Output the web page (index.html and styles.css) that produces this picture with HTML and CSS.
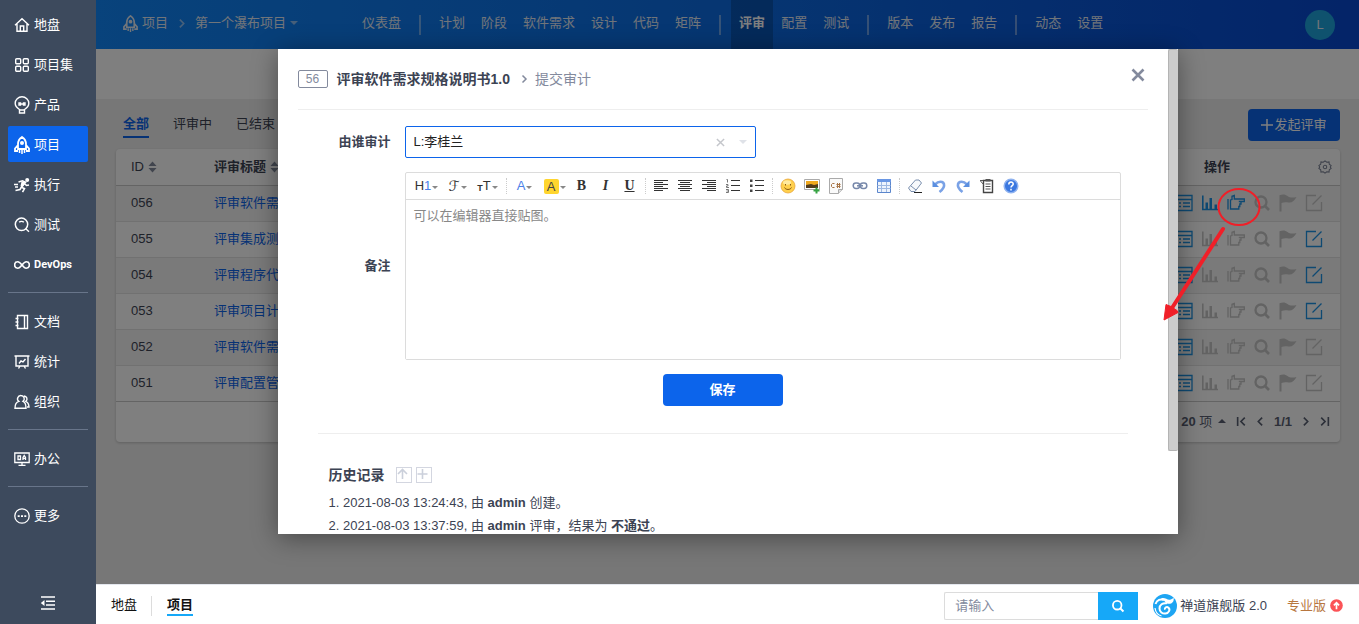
FILE: index.html
```html
<!DOCTYPE html>
<html lang="zh-CN">
<head>
    <meta charset="UTF-8">
    <meta name="viewport" content="width=device-width, initial-scale=1.0">
    <title>提交审计</title>
    <link rel="stylesheet" href="styles.css">
</head>
<body>
    <!-- icon sprite -->
    <svg class="sprite" width="0" height="0" aria-hidden="true">
        <symbol id="i-home" viewBox="0 0 16 16"><path d="M1 8.2 8 1.8l7 6.4M3 7v7.3h10V7M6.3 14V9h3.4v5" fill="none" stroke="currentColor" stroke-width="1.4"/></symbol>
        <symbol id="i-grid" viewBox="0 0 16 16"><g fill="none" stroke="currentColor" stroke-width="1.4"><rect x="1.7" y="1.7" width="5" height="5" rx="1"/><rect x="9.3" y="1.7" width="5" height="5" rx="1"/><rect x="1.7" y="9.3" width="5" height="5" rx="1"/><rect x="9.3" y="9.3" width="5" height="5" rx="1"/></g></symbol>
        <symbol id="i-bulb" viewBox="0 0 16 18"><path d="M5.5 13.5C3 12 1.2 10 1.2 7.3a6.8 6.5 0 0 1 13.6 0C14.8 10 13 12 10.5 13.5V17h-5zM5.500 14h5M5 7h1.500v2H5zM9.500 7H11v2H9.500zM6.500 8h3" fill="none" stroke="currentColor" stroke-width="1.4"/></symbol>
        <symbol id="i-rocket" viewBox="0 0 16 18"><path d="M8 .9C5 2.800 4 5.500 4 8v5h8V8c0-2.500-1-5.200-4-7.100zM4 9l-3 3.500V15h3M12 9l3 3.500V15h-3" fill="none" stroke="currentColor" stroke-width="1.800"/><circle cx="8" cy="7" r="2" fill="currentColor"/><path d="M5.500 14v3M8 14v4M10.500 14v3" stroke="currentColor" stroke-width="1.500"/></symbol>
        <symbol id="i-run" viewBox="0 0 16 16"><circle cx="13.200" cy="3" r="2" fill="currentColor"/><path d="M4.500 5 8.500 3.800l3 1.400-4 5 3 1.500-2 3.500M8 9 6 12.500l-4.500 1M10.500 6.500 12.500 8.500l2.500-.5M0 7.500h4M1 10h3" fill="none" stroke="currentColor" stroke-width="1.600"/><path d="M7.500 4.500h4L9 9.500 6.500 9z" fill="currentColor"/></symbol>
        <symbol id="i-test" viewBox="0 0 16 16"><circle cx="7.500" cy="7.300" r="6.200" fill="none" stroke="currentColor" stroke-width="1.5"/><path d="m11.500 11.500 3.500 3.200M5.200 5.300c1-1.300 3.600-1.300 4.600 0" fill="none" stroke="currentColor" stroke-width="1.400"/></symbol>
        <symbol id="i-loop" viewBox="0 0 16 16"><path d="M8 8C6 5.500 5 4.800 3.800 4.800a3.200 3.200 0 0 0 0 6.400C5 11.200 6 10.500 8 8s3-3.200 4.200-3.200a3.200 3.200 0 0 1 0 6.400C11 11.200 10 10.500 8 8z" fill="none" stroke="currentColor" stroke-width="1.600"/></symbol>
        <symbol id="i-doc" viewBox="0 0 16 16"><path d="M3.500 1.500h10v13h-10zM10.500 1.500v13M1.500 4.500h3M1.500 8h3M1.500 11.500h3" fill="none" stroke="currentColor" stroke-width="1.400"/></symbol>
        <symbol id="i-board" viewBox="0 0 16 16"><path d="M.5 2h15M2 2v10h12V2M6 12l-1.500 2.500M10 12l1.500 2.500M5 9.500l2-2.500 2 1 2.500-3" fill="none" stroke="currentColor" stroke-width="1.400"/></symbol>
        <symbol id="i-users" viewBox="0 0 16 16"><path d="M7 1.500a3.300 3.300 0 0 1 2 5.900c2 .8 3 2.600 3 6.800H1c0-4.200 1-6 3.800-6.800A3.300 3.300 0 0 1 7 1.500zM10 2a3 3 0 0 1 1.800 5.400c2 .9 3 2.600 3.200 5.600h-2" fill="none" stroke="currentColor" stroke-width="1.400"/></symbol>
        <symbol id="i-oa" viewBox="0 0 16 16"><path d="M.8 2h14.400v9.500H.8zM8 11.500V14M4.500 14.300h7M4 5h2.500v3.500H4zM9 9V6.500l1.200-2 1.300 2V9M9 7.400h2.500" fill="none" stroke="currentColor" stroke-width="1.300"/></symbol>
        <symbol id="i-more" viewBox="0 0 16 16"><circle cx="8" cy="8" r="7.200" fill="none" stroke="currentColor" stroke-width="1.300"/><path d="M3.700 7.200h2v1.800h-2zM7 7.200h2v1.800H7zM10.300 7.200h2v1.800h-2z" fill="currentColor"/></symbol>
        <symbol id="i-fold" viewBox="0 0 16 16"><path d="M1 2h14M6 6.200h9M6 10h9M1 14h14" stroke="currentColor" stroke-width="1.600"/><path d="M4.500 5v6L.8 8z" fill="currentColor"/></symbol>
        <symbol id="i-sort" viewBox="0 0 10 12"><path d="M5 0l4.500 5h-9zM5 12l4.500-5h-9z" fill="currentColor"/></symbol>
        <symbol id="i-gear" viewBox="0 0 16 16"><path d="M8 1l2 1.600 2.600-.4.300 2.600L15 6.500 14 8l1 1.600-2.100 1.600-.3 2.600-2.600-.4L8 15l-2-1.600-2.600.4-.3-2.600L1 9.600 2 8 1 6.500l2.100-1.700.3-2.600 2.600.4z" fill="none" stroke="currentColor" stroke-width="1.200"/><circle cx="8" cy="8" r="2" fill="none" stroke="currentColor" stroke-width="1.200"/></symbol>
        <symbol id="i-list" viewBox="0 0 18 18"><path d="M1 1.500h16v15H1zM1 5.500h16M4 9h2M4 12.500h2M8 9h7M8 12.500h7" fill="none" stroke="currentColor" stroke-width="1.300"/></symbol>
        <symbol id="i-chart" viewBox="0 0 18 18"><path d="M1.800 1.500v14H17" fill="none" stroke="currentColor" stroke-width="1.600"/><path d="M4.500 8.500H7V16H4.500zM8.500 4H11v12H8.500zM13.500 10.500H16V16h-2.500z" fill="currentColor"/></symbol>
        <symbol id="i-hand" viewBox="0 0 18 18"><path d="M1 5v10.500M3.500 15V6L5 5.500V2.200L7.300 1.500V5H17.300v2.500h-5.500H14V10h-1.200v2.500h-1V15z" fill="none" stroke="currentColor" stroke-width="1.300"/></symbol>
        <symbol id="i-search" viewBox="0 0 18 18"><circle cx="8" cy="8" r="5.500" fill="none" stroke="currentColor" stroke-width="2.300"/><path d="m11.500 11.500 4.500 4.500" stroke="currentColor" stroke-width="2.600"/></symbol>
        <symbol id="i-flag" viewBox="0 0 18 18"><path d="M.5 1.200C4-.2 6.500.3 8.500 2s5 2 9 1c-2 3.800-4.500 6-8 5.500-2.500-.4-4.500-.5-7 .5v8.500h-2z" fill="currentColor"/></symbol>
        <symbol id="i-edit" viewBox="0 0 18 18"><path d="M11 1.500H1.500v15h15V8M7.500 10.500 16.500 1.500" fill="none" stroke="currentColor" stroke-width="1.300"/></symbol>
        <symbol id="i-left" viewBox="0 0 10 10"><path d="M6.500 1.500 3 5l3.500 3.500" fill="none" stroke="currentColor" stroke-width="1.500"/></symbol>
        <symbol id="i-right" viewBox="0 0 10 10"><path d="M3.500 1.500 7 5 3.500 8.500" fill="none" stroke="currentColor" stroke-width="1.500"/></symbol>
        <symbol id="i-first" viewBox="0 0 10 10"><path d="M1.500 1v8M8 1.500 4.500 5 8 8.500" fill="none" stroke="currentColor" stroke-width="1.500"/></symbol>
        <symbol id="i-last" viewBox="0 0 10 10"><path d="M8.500 1v8M2 1.500 5.500 5 2 8.500" fill="none" stroke="currentColor" stroke-width="1.500"/></symbol>
        <symbol id="i-close" viewBox="0 0 14 14"><path d="m1.500 1.500 11 11M12.500 1.500l-11 11" stroke="currentColor" stroke-width="2.600"/></symbol>
    </svg>

    <aside class="sidebar">
        <nav class="menu">
            <a href="#"><svg><use href="#i-home"/></svg>地盘</a>
            <a href="#"><svg><use href="#i-grid"/></svg>项目集</a>
            <a href="#"><svg class="tall"><use href="#i-bulb"/></svg>产品</a>
            <a href="#" class="active"><svg class="tall"><use href="#i-rocket"/></svg>项目</a>
            <a href="#"><svg><use href="#i-run"/></svg>执行</a>
            <a href="#"><svg><use href="#i-test"/></svg>测试</a>
            <a href="#"><svg><use href="#i-loop"/></svg><span class="devops">DevOps</span></a>
            <hr>
            <a href="#"><svg><use href="#i-doc"/></svg>文档</a>
            <a href="#"><svg><use href="#i-board"/></svg>统计</a>
            <a href="#"><svg><use href="#i-users"/></svg>组织</a>
            <hr>
            <a href="#"><svg><use href="#i-oa"/></svg>办公</a>
            <hr>
            <a href="#"><svg><use href="#i-more"/></svg>更多</a>
        </nav>
        <button type="button" class="fold" aria-label="收起"><svg><use href="#i-fold"/></svg></button>
    </aside>

    <div class="app">
        <header class="topbar">
            <div class="crumb">
                <a href="#"><svg><use href="#i-rocket"/></svg>项目</a>
                <svg class="sep"><use href="#i-right"/></svg>
                <a href="#">第一个瀑布项目<i class="caret"></i></a>
            </div>
            <nav class="topnav">
                <a href="#">仪表盘</a><i></i>
                <a href="#">计划</a><a href="#">阶段</a><a href="#">软件需求</a><a href="#">设计</a><a href="#">代码</a><a href="#">矩阵</a><i></i>
                <a href="#" class="active">评审</a><a href="#">配置</a><a href="#">测试</a><i></i>
                <a href="#">版本</a><a href="#">发布</a><a href="#">报告</a><i></i>
                <a href="#">动态</a><a href="#">设置</a>
            </nav>
            <span class="avatar">L</span>
        </header>
        <div class="subbar"></div>

        <main class="content">
            <div class="toolbar">
                <nav class="tabs">
                    <a href="#" class="active">全部</a>
                    <a href="#">评审中</a>
                    <a href="#">已结束</a>
                </nav>
                <button type="button" class="create"><svg viewBox="0 0 12 12"><path d="M6 0v12M0 6h12" stroke="currentColor" stroke-width="1.500"/></svg>发起评审</button>
            </div>
            <div class="panel">
                <table>
                    <thead>
                        <tr>
                            <th class="col-id">ID <svg class="sort"><use href="#i-sort"/></svg></th>
                            <th>评审标题 <svg class="sort"><use href="#i-sort"/></svg></th>
                            <th class="col-act"><div class="act-head">操作<svg><use href="#i-gear"/></svg></div></th>
                        </tr>
                    </thead>
                    <tbody id="reviewList"></tbody>
                </table>
                <div class="pager">
                    <span class="size"><b>20</b> 项 <i class="caret up"></i></span>
                    <svg><use href="#i-first"/></svg>
                    <svg><use href="#i-left"/></svg>
                    <b>1/1</b>
                    <svg><use href="#i-right"/></svg>
                    <svg><use href="#i-last"/></svg>
                </div>
            </div>
        </main>

        <div class="backdrop">
            <section class="modal" role="dialog" aria-labelledby="modalTitle">
                <div class="modal-body">
                    <div class="modal-head">
                        <span class="badge">56</span>
                        <h2 id="modalTitle">评审软件需求规格说明书1.0</h2>
                        <svg class="arrow"><use href="#i-right"/></svg>
                        <span class="action">提交审计</span>
                        <button type="button" class="close" aria-label="关闭"><svg><use href="#i-close"/></svg></button>
                    </div>
                    <form class="form">
                        <label for="auditor">由谁审计</label>
                        <div class="picker">
                            <select id="auditor"><option>L:李桂兰</option></select>
                            <button type="button" class="clear" aria-label="清除"><svg viewBox="0 0 10 10"><path d="m1 1 8 8M9 1 1 9" stroke="currentColor" stroke-width="1.600"/></svg></button>
                            <i class="caret"></i>
                        </div>
                        <label for="comment">备注</label>
                        <div class="editor">
                            <div class="edit-tools">
                                <button type="button" class="drop first">H<span class="blue">1</span><i class="caret"></i></button>
                                <button type="button" class="drop script">ℱ<i class="caret"></i></button>
                                <button type="button" class="drop"><small>T</small>T<i class="caret"></i></button>
                                <i class="split"></i>
                                <button type="button" class="drop blue">A<i class="caret"></i></button>
                                <button type="button" class="drop"><mark>A</mark><i class="caret"></i></button>
                                <button type="button" class="serif"><b>B</b></button>
                                <button type="button" class="serif"><b><em>I</em></b></button>
                                <button type="button" class="serif"><b><u>U</u></b></button>
                                <i class="split"></i>
                                <button type="button" aria-label="左对齐"><svg viewBox="0 0 16 16"><path d="M1 2.500h14M1 4.500h9M1 6.500h14M1 8.500h9M1 10.500h14M1 12.500h9" stroke="#333"/></svg></button>
                                <button type="button" aria-label="居中"><svg viewBox="0 0 16 16"><path d="M1 2.500h14M3 4.500h10M1 6.500h14M3 8.500h10M1 10.500h14M3 12.500h10" stroke="#333"/></svg></button>
                                <button type="button" aria-label="右对齐"><svg viewBox="0 0 16 16"><path d="M1 2.500h14M6 4.500h9M1 6.500h14M6 8.500h9M1 10.500h14M6 12.500h9" stroke="#333"/></svg></button>
                                <button type="button" aria-label="编号"><svg viewBox="0 0 16 16"><path d="M6 2.500h9M6 7.500h9M6 12.500h9" stroke="#333"/><path d="M1.500 1.500h1v3M1 6.500h2v1.500H1.500v1.500H4M1 11.500h2.500v3H1M1.500 13h2" fill="none" stroke="#777"/></svg></button>
                                <button type="button" aria-label="列表"><svg viewBox="0 0 16 16"><path d="M6 2.500h9M6 7.500h9M6 12.500h9" stroke="#333"/><path d="M1 1.500h2.500V4H1zM1 6.500h2.500V9H1zM1 11.500h2.500V14H1z" fill="#444"/></svg></button>
                                <i class="split"></i>
                                <button type="button" aria-label="表情"><svg viewBox="0 0 16 16"><circle cx="8" cy="8" r="7" fill="#ffd04d" stroke="#e8a63a" stroke-width=".8"/><ellipse cx="7" cy="4.500" rx="4" ry="2.200" fill="#ffeaa0"/><path d="M5.500 6v1.500M10.500 6v1.500M4.500 9.500c1 2.600 6 2.600 7 0" fill="none" stroke="#8a5a12"/></svg></button>
                                <button type="button" aria-label="图片"><svg viewBox="0 0 16 16"><path d="M.5 1.500h15v10H.5z" fill="#fff" stroke="#aaa"/><path d="M2 3h12v4H2z" fill="#f0a91e"/><path d="M2 7l5-1 3 1 4-1v4H2z" fill="#503b1c"/><path d="M12.500 9.500v6M9.500 12.500h6" stroke="#36a343" stroke-width="2"/></svg></button>
                                <button type="button" aria-label="代码"><svg viewBox="0 0 16 16"><path d="M1.500.5h13v11l-4 4h-9z" fill="#fafafa" stroke="#aaa"/><path d="M14.500 11.500h-4v4" fill="#ddd" stroke="#aaa"/><path d="M6.500 5.500h-2l-1 1v2l1 1h2M9.500 5v5M11.500 5v5M8.500 6.500h4M8.500 8.500h4" fill="none" stroke="#a77345"/></svg></button>
                                <button type="button" aria-label="链接"><svg viewBox="0 0 16 16"><g fill="none" stroke="#7788aa" stroke-width="1.500"><rect x="1.200" y="5" width="6.500" height="5.500" rx="2.700"/><rect x="8.300" y="5" width="6.500" height="5.500" rx="2.700"/><path d="M5 7.800h6"/></g></svg></button>
                                <button type="button" aria-label="表格"><svg viewBox="0 0 16 16"><path d="M1.500 1.500h13v13h-13z" fill="#eef4fd" stroke="#5b86cc"/><path d="M1 1h14v3H1z" fill="#6a97e4"/><path d="M1.500 7.500h13M1.500 10.500h13M5.500 4v10M10.500 4v10" stroke="#9fb9e2"/></svg></button>
                                <i class="split"></i>
                                <button type="button" aria-label="清除格式"><svg viewBox="0 0 16 16"><path d="m1.500 10 7-8h3.500l2.500 3L8 13.500H4z" fill="#f7f9fc" stroke="#7a8fae"/><path d="M4 8l5 4" fill="none" stroke="#7a8fae"/><path d="M7 14.500h8" stroke="#222"/></svg></button>
                                <button type="button" aria-label="撤销"><svg viewBox="0 0 16 16"><path d="M4 6.500C9 1.500 15 4 12.500 9.500 11.800 11 10.500 12.500 8.500 14" fill="none" stroke="#7aa2e6" stroke-width="2.600"/><path d="M1.500 2.500V9H8z" fill="#5b8fe0"/></svg></button>
                                <button type="button" aria-label="重做"><svg viewBox="0 0 16 16"><path d="M12 6.500C7 1.500 1 4 3.500 9.500 4.200 11 5.500 12.500 7.500 14" fill="none" stroke="#7aa2e6" stroke-width="2.600"/><path d="M14.500 2.500V9H8z" fill="#5b8fe0"/></svg></button>
                                <button type="button" aria-label="源代码"><svg viewBox="0 0 16 16"><path d="M4.500 2.500h9v12h-9z" fill="#fff" stroke="#444" stroke-width="1.400"/><path d="M6.500 1h5v2.500h-5z" fill="#555"/><path d="M6.500 6h5M6.500 8.500h5M6.500 11h5M1.500 3l3 3.500M1 2.500h3" stroke="#555"/></svg></button>
                                <button type="button" aria-label="帮助"><svg viewBox="0 0 16 16"><circle cx="8" cy="8" r="6.800" fill="#3b78e0" stroke="#8fb2ef" stroke-width="1.500"/><path d="M5.800 6.500c0-3.300 4.600-3 4.400-.4C10.100 7.600 8 7.800 8 9.600M8 10.800v1.800" fill="none" stroke="#fff" stroke-width="1.500"/></svg></button>
                            </div>
                            <textarea id="comment" placeholder="可以在编辑器直接贴图。"></textarea>
                        </div>
                        <button type="submit" class="save">保存</button>
                    </form>
                    <div class="history">
                        <h3>历史记录
                            <button type="button" aria-label="倒序"><svg viewBox="0 0 14 14"><path d="M5.500 11V2M1 6l4.500-4.500L10 6" fill="none" stroke="currentColor" stroke-width="1.600"/></svg></button>
                            <button type="button" aria-label="展开"><svg viewBox="0 0 14 14"><path d="M5.500 1v10M.5 6h10" stroke="currentColor" stroke-width="1.600"/></svg></button>
                        </h3>
                        <p>1. 2021-08-03 13:24:43, 由 <b>admin</b> 创建。</p>
                        <p>2. 2021-08-03 13:37:59, 由 <b>admin</b> 评审，结果为 <b>不通过</b>。</p>
                    </div>
                </div>
                <i class="scroll-thumb"></i>
            </section>
        </div>
        <!-- callout over the submit-audit action -->
        <svg class="callout" viewBox="0 0 100 136">
            <ellipse cx="77" cy="21" rx="20.500" ry="18" fill="none" stroke="#f01f28" stroke-width="2"/>
            <path d="M61 43 10 122" stroke="#f01f28" stroke-width="4" stroke-linecap="round"/>
            <path d="M2 134 4 118.500l5 2 6 4 1 2z" fill="#f01f28" stroke="#f01f28"/>
        </svg>
    </div>

    <footer class="footer">
        <nav>
            <a href="#">地盘</a>
            <a href="#" class="active">项目</a>
        </nav>
        <form class="search">
            <input type="text" placeholder="请输入" aria-label="搜索">
            <button type="button" aria-label="搜索"><svg><use href="#i-search"/></svg></button>
        </form>
        <a href="#" class="brand">
            <svg viewBox="0 0 24 24"><circle cx="12" cy="12" r="12" fill="#1ea5f3"/><path d="M2.500 10C4 6 7.500 4.500 11 6" fill="none" stroke="#fff" stroke-width="2"/><path d="M8 4.500c4-1.500 6 1.800 9 1.200 2-.3 3-1.200 3.500-2.200 1 4-1.500 6.800-5.500 6.300C12 9.400 12 6 8 4.500z" fill="#fff"/><path d="M14 9.300C9.500 8.500 6.500 11 6.500 14.500c0 3.500 3 5.500 6 5 3.500-.5 5-4 3-5.800-1.700-1.400-4.300-.2-3.500 2" fill="none" stroke="#fff" stroke-width="2"/><path d="M2 14c.5 4 3 7 6.500 8" fill="none" stroke="#fff" stroke-width="1.200"/></svg>禅道旗舰版 2.0</a>
        <a href="#" class="pro">专业版<svg viewBox="0 0 14 14"><circle cx="7" cy="7" r="6.800" fill="#fb5357"/><path d="M7 11V4M4.200 6.800 7 4l2.800 2.800" fill="none" stroke="#fff" stroke-width="1.800"/></svg></a>
    </footer>

    <script>
    const actions = ['list', 'chart', 'hand', 'search', 'flag', 'edit'];
    // on: actions that are enabled for the review
    const reviews = [
        { id: '056', title: '评审软件需求规格说明书1.0', on: ['list', 'chart', 'hand'] },
        { id: '055', title: '评审集成测试计划', on: ['list', 'edit'] },
        { id: '054', title: '评审程序代码', on: ['list', 'edit'] },
        { id: '053', title: '评审项目计划', on: ['list', 'edit'] },
        { id: '052', title: '评审软件需求规格说明书', on: ['list'] },
        { id: '051', title: '评审配置管理计划', on: ['list'] }
    ];

    document.getElementById('reviewList').innerHTML = reviews.map(r => `
        <tr>
            <td>${r.id}</td>
            <td><a href="#">${r.title}</a></td>
            <td><div class="acts">${actions.map(a => `<svg class="${r.on.includes(a) ? 'on' : ''}"><use href="#i-${a}"/></svg>`).join('')}</div></td>
        </tr>`).join('');
    </script>
</body>
</html>
```

FILE: styles.css
```css
* {
    box-sizing: border-box;
}

body {
    margin: 0;
    height: 100vh;
    display: grid;
    grid-template-columns: 96px 1fr;
    grid-template-rows: 1fr 40px;
    font-family: "Liberation Sans", "Noto Sans CJK SC", sans-serif;
    font-size: 13px;
    line-height: 20px;
    color: #3c4353;
    overflow: hidden;
}

a {
    color: inherit;
    text-decoration: none;
}

button {
    font: inherit;
    color: inherit;
    border: 0;
    padding: 0;
    background: none;
}

.sprite {
    position: absolute;
}

.caret {
    display: inline-block;
    border: 4px solid transparent;
    border-top-color: currentColor;
    border-bottom: 0;
}

.caret.up {
    border-top: 0;
    border-bottom: 4px solid currentColor;
}

/* sidebar */
.sidebar {
    grid-row: 1 / 3;
    display: flex;
    flex-direction: column;
    justify-content: space-between;
    padding: 6px 8px 11px;
    background: #3d4a5d;
    color: #fff;
}

.menu {
    display: flex;
    flex-direction: column;
}

.menu a {
    display: flex;
    align-items: center;
    gap: 4px;
    height: 36px;
    margin-bottom: 4px;
    padding: 2px 6px 0;
    border-radius: 2px;
}

.menu svg,
.fold svg {
    width: 16px;
    height: 16px;
}

.menu svg.tall {
    height: 20px;
}

.menu a.active {
    background: #0c64eb;
}

.menu hr {
    width: 100%;
    margin: 6px 0 10px;
    border: 0;
    border-top: 1px solid #68758a;
}

.devops {
    font-family: Roboto, sans-serif;
    font-size: 11px;
    font-weight: bold;
}

.fold {
    align-self: center;
    height: 18px;
}

/* top bar */
.app {
    position: relative;
    min-width: 0;
    background: #efefef;
}

.topbar {
    display: grid;
    grid-template-columns: 258px auto 1fr;
    align-items: center;
    height: 49px;
    padding-right: 24px;
    background: linear-gradient(90deg, #1086f8, #0c6ce4 50%, #0848d0);
    color: #e3eaf4;
}

.crumb {
    display: flex;
    align-items: center;
    gap: 8px;
    padding: 0 0 3px 27px;
}

.crumb a {
    display: flex;
    align-items: center;
    gap: 4px;
}

.crumb a svg {
    width: 15px;
    height: 17px;
}

.crumb .sep {
    width: 11px;
    height: 11px;
    opacity: .6;
}

.crumb .caret {
    opacity: .6;
}

.topnav {
    display: flex;
    align-items: center;
}

.topnav a {
    padding: 0 8px 3px;
    line-height: 46px;
}

.topnav a.active {
    background: rgba(0, 0, 0, .2);
    font-weight: bold;
    color: #fff;
}

.topnav i {
    width: 2px;
    height: 20px;
    margin: 0 10px;
    background: rgba(255, 255, 255, .4);
}

.avatar {
    justify-self: end;
    width: 30px;
    border-radius: 50%;
    background: #1ea5dc;
    line-height: 30px;
    text-align: center;
}

.subbar {
    height: 50px;
    background: #fff;
}

/* review list */
.content {
    padding: 10px 19px 0 20px;
}

.toolbar {
    display: flex;
    justify-content: space-between;
    height: 40px;
}

.tabs {
    display: flex;
    gap: 24px;
    padding: 4px 7px;
    line-height: 22px;
}

.tabs a {
    height: 25px;
}

.tabs a.active {
    border-bottom: 2px solid #0c64eb;
    color: #0c64eb;
    font-weight: bold;
}

.create {
    display: flex;
    align-items: center;
    justify-content: center;
    gap: 1px;
    width: 92px;
    height: 32px;
    border-radius: 4px;
    background: #0c64eb;
    color: #fff;
}

.create svg {
    width: 12px;
    height: 12px;
}

.panel {
    border-radius: 4px;
    background: #fff;
    box-shadow: 0 1px 3px rgba(0, 0, 0, .2);
}

table {
    width: 100%;
    border-collapse: collapse;
    table-layout: fixed;
}

th,
td {
    height: 36px;
    padding: 0 15px;
    border-bottom: 1px solid #e2e2e2;
    text-align: left;
}

th {
    border-bottom: 1px solid #c8c8c8;
}

tbody tr:last-child td {
    border-bottom: 1px solid #c8c8c8;
}

tbody tr:nth-child(odd) {
    background: #f4f4f4;
}

td a {
    color: #0c64eb;
}

.col-id {
    width: 83px;
    font-weight: normal;
}

.col-act {
    width: 169px;
    padding: 0 8px 0 33px;
}

td:last-child {
    padding: 0 17px 0 0;
}

.sort {
    width: 9px;
    height: 12px;
    vertical-align: -2px;
    color: #838a9d;
}

.act-head {
    display: flex;
    justify-content: space-between;
    align-items: center;
}

.act-head svg {
    width: 14px;
    height: 14px;
    color: #7c8396;
}

.acts {
    display: flex;
    justify-content: flex-end;
    gap: 8px;
    color: #c6c6c6;
}

.acts svg {
    flex: none;
    width: 18px;
    height: 18px;
}

.acts .on {
    color: #1c93e4;
}

.pager {
    display: flex;
    align-items: center;
    justify-content: flex-end;
    gap: 8px;
    height: 40px;
    padding-right: 10px;
    color: #5a6173;
}

.pager .caret {
    margin: 0 2px 3px;
}

.pager svg {
    width: 11px;
    height: 11px;
}

/* modal */
.backdrop {
    position: absolute;
    inset: 0;
    display: flex;
    justify-content: center;
    padding: 49px 0 50px;
    background: rgba(0, 0, 0, .5);
}

.modal {
    position: relative;
    width: 900px;
    background: #fff;
    box-shadow: 0 4px 24px rgba(0, 0, 0, .4);
}

.modal-body {
    height: 100%;
    margin-right: 10px;
    padding: 0 20px;
    overflow: hidden;
}

.scroll-thumb {
    position: absolute;
    top: 0;
    right: 0;
    width: 10px;
    height: 402px;
    border: 1px solid #b4b4b4;
    border-right: 0;
    border-radius: 2px;
    background: #ccc;
}

.modal-head {
    display: flex;
    align-items: center;
    height: 61px;
    border-bottom: 1px solid #eee;
    font-size: 14px;
    color: #838a9d;
}

.modal-head h2 {
    margin: 0 9px;
    font-size: 14px;
    color: #3c4353;
}

.badge {
    width: 30px;
    border: 1px solid #838a9d;
    border-radius: 2px;
    font-size: 12px;
    line-height: 16px;
    text-align: center;
}

.arrow {
    width: 10px;
    height: 10px;
}

.action {
    margin-left: 6px;
}

.close {
    display: flex;
    margin: 0 3px 8px auto;
}

.close svg {
    width: 14px;
    height: 14px;
}

.form {
    display: grid;
    grid-template-columns: 73px 1fr;
    gap: 14px;
    align-items: center;
    margin: 0 20px;
    padding: 16px 7px 27px 0;
    border-bottom: 1px solid #eee;
}

.form label {
    text-align: right;
    font-weight: bold;
}

.picker {
    position: relative;
    width: 351px;
    height: 32px;
}

.picker select {
    width: 100%;
    height: 100%;
    padding: 0 8px;
    border: 1px solid #0c64eb;
    border-radius: 2px;
    appearance: none;
    background: #fff;
    font: inherit;
    color: #222;
    outline: 0;
}

.picker .clear {
    position: absolute;
    top: 12px;
    right: 31px;
    display: flex;
    color: #c4c6cb;
}

.clear svg {
    width: 9px;
    height: 9px;
}

.picker .caret {
    position: absolute;
    top: 14px;
    right: 9px;
    color: #dfe2e8;
}

.editor {
    border: 1px solid #dcdcdc;
    border-radius: 2px;
}

.edit-tools {
    display: flex;
    height: 27px;
    padding: 0 5px;
    border-bottom: 1px solid #dcdcdc;
}

.edit-tools button {
    display: flex;
    align-items: center;
    justify-content: center;
    width: 24px;
    color: #333;
}

.edit-tools svg {
    width: 16px;
    height: 16px;
}

.edit-tools .drop {
    width: 30px;
}

.edit-tools .first {
    width: 32px;
}

.edit-tools .caret {
    margin: 2px 0 0 1px;
    border-width: 3px 3px 0;
    color: #888;
}

.edit-tools small {
    padding-top: 3px;
    font-size: 9px;
    font-weight: bold;
}

.edit-tools .script {
    font-family: "DejaVu Sans", sans-serif;
    font-size: 14px;
}

.edit-tools .serif {
    font-family: "Liberation Serif", serif;
    font-size: 14px;
}

.edit-tools .blue {
    color: #4a80e8;
}

.edit-tools mark {
    width: 15px;
    border-radius: 2px;
    background: #ffd52e;
    line-height: 15px;
    color: #444;
}

.split {
    height: 16px;
    margin: 5px 3px;
    border-left: 1px dotted #ccc;
}

.editor textarea {
    display: block;
    width: 100%;
    height: 159px;
    padding: 6px 8px;
    border: 0;
    resize: none;
    font: inherit;
    outline: 0;
}

.editor textarea::placeholder {
    color: #888;
}

.save {
    grid-column: 1 / 3;
    justify-self: center;
    width: 120px;
    height: 32px;
    margin-left: 7px;
    border-radius: 4px;
    background: #0c64eb;
    color: #fff;
    font-weight: bold;
}

.history {
    padding: 31px 31px 0;
}

.history h3 {
    display: flex;
    align-items: center;
    gap: 4px;
    margin: 0 0 8px;
    font-size: 14px;
}

.history button {
    display: flex;
    width: 16px;
    height: 16px;
    border: 1px solid #d3d6e0;
    color: #cbd0db;
}

.history button:first-of-type {
    margin-left: 7px;
}

.history p {
    margin: 0 0 3px;
    white-space: nowrap;
}

.callout {
    position: absolute;
    top: 186px;
    left: 1066px;
    width: 100px;
    height: 136px;
}

/* footer */
.footer {
    display: flex;
    align-items: center;
    padding: 2px 16px 0 15px;
    border-top: 1px solid #e4e7ee;
    background: #fff;
}

.footer nav {
    display: flex;
    align-items: center;
    flex: 1;
    gap: 30px;
    line-height: 18px;
    color: #111;
}

.footer nav a {
    border-bottom: 2px solid transparent;
}

.footer nav .active {
    position: relative;
    border-color: #16a8f8;
    font-weight: bold;
}

.footer nav .active::before {
    content: "";
    position: absolute;
    left: -16px;
    height: 20px;
    border-left: 1px solid #dcdcdc;
}

.search {
    display: flex;
    width: 194px;
    height: 28px;
}

.search input {
    flex: 1;
    min-width: 0;
    padding: 0 10px;
    border: 1px solid #dcdcdc;
    border-right: 0;
    border-radius: 2px 0 0 2px;
    font: inherit;
}

.search input::placeholder {
    color: #838a9d;
}

.search button {
    display: flex;
    align-items: center;
    justify-content: center;
    width: 40px;
    background: #16a8f8;
    color: #fff;
}

.search button svg {
    width: 14px;
    height: 14px;
}

.brand {
    display: flex;
    align-items: center;
    gap: 3px;
    margin: 0 20px 0 15px;
}

.brand svg {
    width: 24px;
    height: 24px;
}

.pro {
    display: flex;
    align-items: center;
    gap: 4px;
    color: #b8763f;
}

.pro svg {
    width: 13px;
    height: 13px;
}
```
